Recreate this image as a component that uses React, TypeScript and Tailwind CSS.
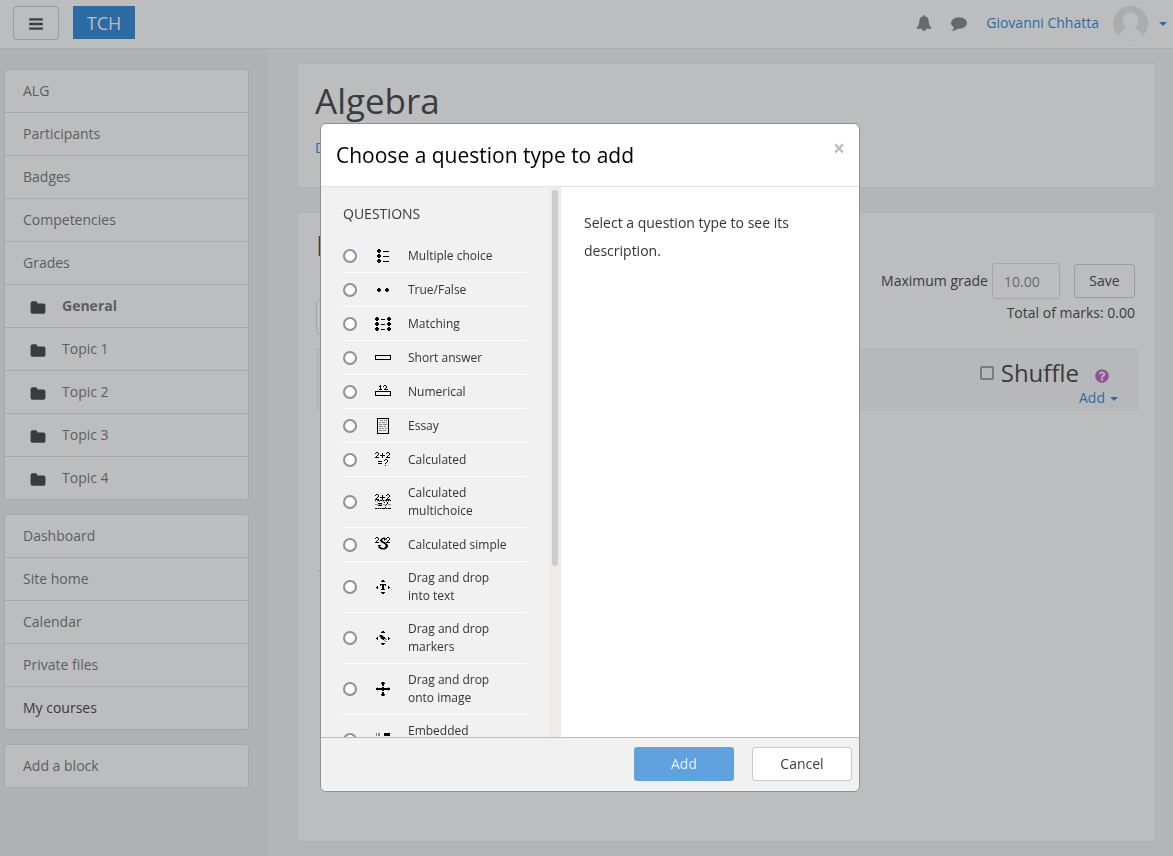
import { FaQuestionCircle } from "react-icons/fa";

/* Question type icons are 16x16 pixel drawings: "#" is black, "+" is grey. */
const PIXELS: Record<string, string[]> = {
  multichoice: [
    "................", "...##...........", "..####..........", "..####..######..", "...##...........",
    "................", "...##...........", "..####..........", "..####..######..", "...##...........",
    "................", "...##...........", "..####..........", "..####..######..", "...##...........", "................",
  ],
  truefalse: [
    "................", "................", "................", "................", "................", "................",
    "...##......##...", "..####....####..", "..####....####..", "...##......##...", "................",
    "................", "................", "................", "................", "................",
  ],
  match: [
    "................", ".##..........##.", "####........####", "####..####..####", ".##..........##.",
    "................", ".##..........##.", "####........####", "####..####..####", ".##..........##.",
    "................", ".##..........##.", "####........####", "####..####..####", ".##..........##.", "................",
  ],
  shortanswer: [
    "................", "................", "................", "................", "................",
    "################", "#..............#", "#..............#", "#..............#", "################",
    "................", "................", "................", "................", "................", "................",
  ],
  numerical: [
    "................", ".....#...##.....", "....##..#..#....", ".....#.....#....", ".....#....#.....",
    "....###..####...", "................", "################", "#..............#", "#..............#",
    "#..............#", "################", "................", "................", "................", "................",
  ],
  essay: [
    "..############..", "..#..........#..", "..#..+++.+++.#..", "..#..........#..", "..#.++.+++.+.#..", "..#..........#..",
    "..#.+++.++++.#..", "..#..........#..", "..#.++++.++..#..", "..#..........#..", "..#.++.++.++.#..", "..#..........#..",
    "..#.+++.+++..#..", "..#..........#..", "..#..........#..", "..############..",
  ],
  calculated: [
    ".##.........##..", "#..#...#...#..#.", "...#...#......#.", "..#..#####...#..", ".#.....#....#...", "####...#...####.",
    "................", "..........##....", ".........#..#...", "...####.....#...", "...........#....", "...####...#.....",
    "................", "..........#.....", "................", "................",
  ],
  calculatedmulti: [
    ".##.........##..", "#..#...#...#..#.", "...#...#......#.", "..#..#####...#..", ".#.....#....#...", "####...#...####.",
    "+.+#+##+#+##+#+#", "+.+.+...+..+.+..", ".........#..#...", "...####.....#...", "+++.+++.++.#.+++",
    "...####...#.....", "................", "..........#.....", "##+#+#+###+#+###", "................",
  ],
  calculatedsimple: [
    ".##.....++..##..", "#..#..+###+#..#.", "...#.+#+.##+..#.", "..#..##+.+...#..", ".#...+##+...#...", "####..+###+####.",
    "........+##+....", "..........##+...", "...###....+##...", "...+#.....+##...", "...+##+..+##+...",
    "....+######+....", "......++++......", "................", "................", "................",
  ],
  ddwtos: [
    "................", ".......##.......", "......####......", "................", "................", ".....######.....",
    ".....#.##.#.....", "..#....##....#..", ".##....##....##.", "..#....##....#..", "......####......",
    "................", "................", "......####......", ".......##.......", "................",
  ],
  ddmarker: [
    "................", ".......##.......", "......####......", "................", "................", "....+##+........",
    "....+###+.......", "..#..+####...#..", ".##...####+..##.", "..#....+#.++.#..", ".........+......",
    "..........++....", "................", "......####......", ".......##.......", "................",
  ],
  ddimageortext: [
    "................", "......+##+......", "......####......", ".......##.......", ".......##.......", "................",
    "..+....##....+..", ".##############.", ".##############.", "..+....##....+..", "................",
    ".......##.......", ".......##.......", "......####......", "......+##+......", "................",
  ],
  multianswer: [
    "................", ".+.++....######.", ".+.++....######.", ".+.++....######.", "................", "................",
    ".++++.++++.+++..", "................", ".++++++.++++....", "................", "................",
    "................", "................", "................", "................", "................",
  ],
};

function PixelIcon({ name }: { name: string }) {
  return (
    <svg viewBox="0 0 16 16" shapeRendering="crispEdges" aria-hidden="true" className="ml-[18px] h-4 w-4 shrink-0">
      {PIXELS[name].flatMap((row, y) =>
        row.split("").map((c, x) =>
          c === "." ? null : <rect key={`${x}-${y}`} x={x} y={y} width="1" height="1" fill={c === "#" ? "#000" : "#888"} />
        )
      )}
    </svg>
  );
}

const GLYPHS = {
  bars: "M1664 1344v128q0 26-19 45t-45 19h-1408q-26 0-45-19t-19-45v-128q0-26 19-45t45-19h1408q26 0 45 19t19 45zm0-512v128q0 26-19 45t-45 19h-1408q-26 0-45-19t-19-45v-128q0-26 19-45t45-19h1408q26 0 45 19t19 45zm0-512v128q0 26-19 45t-45 19h-1408q-26 0-45-19t-19-45v-128q0-26 19-45t45-19h1408q26 0 45 19t19 45z",
  bell: "M912 1696q0-16-16-16-59 0-101.5-42.5t-42.5-101.5q0-16-16-16t-16 16q0 73 51.5 124.5t124.5 51.5q16 0 16-16zm816-288q0 52-38 90t-90 38h-448q0 106-75 181t-181 75-181-75-75-181h-448q-52 0-90-38t-38-90q50-42 91-88t85-119.5 74.5-158.5 50-206 19.5-260q0-152 117-282.5t307-158.5q-8-19-8-39 0-40 28-68t68-28 68 28 28 68q0 20-8 39 190 28 307 158.5t117 282.5q0 139 19.5 260t50 206 74.5 158.5 85 119.5 91 88z",
  comment:
    "M1792 896q0 174-120 321.5t-326 233-450 85.5q-70 0-145-8-198 175-460 242-49 14-114 22h-5q-15 0-27-10.5t-16-27.5v-1q-3-4-.5-12t2-10 4.5-9.5l6-9 7-8.5 8-9q7-8 31-34.5t34.5-38 31-39.5 32.5-51 27-59 26-76q-157-89-247.5-220t-90.5-281q0-130 71-248.5t191-204.5 286-136.5 348-50.5q244 0 450 85.5t326 233 120 321.5z",
  folder:
    "M1728 608v704q0 92-66 158t-158 66h-1216q-92 0-158-66t-66-158v-960q0-92 66-158t158-66h320q92 0 158 66t66 158v32h672q92 0 158 66t66 158z",
};

function Glyph({ name, className }: { name: keyof typeof GLYPHS; className: string }) {
  return (
    <svg viewBox="0 0 1792 1792" aria-hidden="true" className={className}>
      <path d={GLYPHS[name]} fill="currentColor" />
    </svg>
  );
}

const QUESTIONS = [
  ["multichoice", "Multiple choice"],
  ["truefalse", "True/False"],
  ["match", "Matching"],
  ["shortanswer", "Short answer"],
  ["numerical", "Numerical"],
  ["essay", "Essay"],
  ["calculated", "Calculated"],
  ["calculatedmulti", "Calculated multichoice"],
  ["calculatedsimple", "Calculated simple"],
  ["ddwtos", "Drag and drop into text"],
  ["ddmarker", "Drag and drop markers"],
  ["ddimageortext", "Drag and drop onto image"],
  ["multianswer", "Embedded answers (Cloze)"],
];

type NavEntry = { label: string; kind?: "folder" | "current" | "dark" };

const NAV: NavEntry[][] = [
  [
    { label: "ALG" },
    { label: "Participants" },
    { label: "Badges" },
    { label: "Competencies" },
    { label: "Grades" },
    { label: "General", kind: "current" },
    { label: "Topic 1", kind: "folder" },
    { label: "Topic 2", kind: "folder" },
    { label: "Topic 3", kind: "folder" },
    { label: "Topic 4", kind: "folder" },
  ],
  [
    { label: "Dashboard" },
    { label: "Site home" },
    { label: "Calendar" },
    { label: "Private files" },
    { label: "My courses", kind: "dark" },
  ],
  [{ label: "Add a block" }],
];

function NavItem({ label, kind }: NavEntry) {
  const nested = kind === "folder" || kind === "current";
  return (
    <li className="border-b border-[#a5a8aa] last:border-b-0">
      <a
        href="#"
        className={`flex h-[42px] items-center ${nested ? "gap-4 pl-[25px]" : "pl-[18px]"} ${
          kind === "dark" ? "text-[#3a3b3d]" : "text-[#5c5d5f]"
        } ${kind === "current" ? "font-bold" : ""}`}
      >
        {nested && <Glyph name="folder" className="mt-[3px] h-4 w-4 text-[#3a3b3d]" />}
        {label}
      </a>
    </li>
  );
}

function Header() {
  return (
    <header className="flex h-[49px] items-start border-b border-[#a8abad] bg-[#bcbdbf] pt-[6px] pr-[6px] pl-[13px]">
      <button aria-label="Side panel" className="flex h-[34px] w-[46px] items-center justify-center rounded-[3px] border border-[#999b9d] pt-[2px]">
        <Glyph name="bars" className="h-4 w-4 text-[#3f4042]" />
      </button>
      <a href="#" className="ml-[14px] flex h-[33px] w-[62px] items-center justify-center bg-[#2d6ba5] text-lg text-[#bcbdbf]">
        TCH
      </a>
      <div className="ml-auto flex h-[33px] items-center">
        <button aria-label="Notifications">
          <Glyph name="bell" className="h-4 w-4 text-[#68696b]" />
        </button>
        <button aria-label="Messages" className="ml-[19px]">
          <Glyph name="comment" className="h-4 w-4 text-[#68696b]" />
        </button>
        <a href="#" className="ml-[19px] text-[#2d6ba5]">
          Giovanni Chhatta
        </a>
        <svg viewBox="0 0 35 35" aria-hidden="true" className="mt-[2px] ml-[14px] h-[35px] w-[35px] rounded-full">
          <rect width="35" height="35" fill="#abacae" />
          <ellipse cx="17.5" cy="15" rx="7.8" ry="8.5" fill="#bcbdbf" />
          <path d="M0 35v-4h5c2-5 5-7.500 8-9q4.500 2 9 0c3 1.500 6 4 8 9h5v4z" fill="#bcbdbf" />
        </svg>
        <button aria-label="User menu" className="ml-[11px]">
          <Caret />
        </button>
      </div>
    </header>
  );
}

function Caret() {
  return (
    <svg viewBox="0 0 8 4" aria-hidden="true" className="mt-[2px] h-1 w-2 text-[#2d6ba5]">
      <path d="M0 0h8L4 4z" fill="currentColor" />
    </svg>
  );
}

function Page() {
  return (
    <div className="flex min-h-screen flex-col">
      <Header />
      <div className="flex flex-1">
        <nav className="flex w-[269px] shrink-0 flex-col gap-[14px] bg-[#aeb2b3] pt-5 pr-5 pl-1">
          {NAV.map((group, i) => (
            <ul key={i} className="rounded-[3px] border border-[#a5a8aa] bg-[#bcbdbf]">
              {group.map((item) => (
                <NavItem key={item.label} {...item} />
              ))}
            </ul>
          ))}
        </nav>
        <main className="flex min-w-0 flex-1 flex-col gap-6 pt-[14px] pr-[17px] pb-[14px] pl-7">
          <section className="h-[125px] border border-[#b0b1b3] bg-[#bcbdbf] px-[17px] pt-[14px]">
            <h1 className="text-[35px] leading-[46px] text-[#3a3b3d]">Algebra</h1>
            <a href="#" className="mt-[13px] block leading-[21px] text-[#2d6ba5]">
              Dashboard
            </a>
          </section>
          <section className="flex flex-1 flex-col border border-[#b0b1b3] bg-[#bcbdbf] px-[18px] pt-[14px]">
            <h2 className="text-[28px] leading-9">Editing quiz</h2>
            <div className="flex items-end justify-between pr-[2px]">
              <button className="h-[34px] rounded-[3px] border border-[#a5a6a8] px-[14px]">Repaginate</button>
              <div className="pb-[11px]">
                <form className="flex items-center">
                  <label htmlFor="grade">Maximum grade</label>
                  <input
                    id="grade"
                    defaultValue="10.00"
                    className="ml-1 h-9 w-[68px] rounded-[3px] border border-[#a5a6a8] px-[11px] text-[#67686a]"
                  />
                  <button type="button" className="ml-[14px] h-[34px] w-[61px] rounded-[3px] border border-[#999b9d]">
                    Save
                  </button>
                </form>
                <p className="mt-[3px] text-right leading-[21px]">Total of marks: 0.00</p>
              </div>
            </div>
            <div className="mt-[14px] -mr-px flex h-[63px] flex-col items-end bg-[#b7b8ba] pr-5">
              <div className="mt-2 flex items-center pr-[9px]">
                <input id="shuffle" type="checkbox" className="h-[14px] w-[14px] appearance-none rounded-[2px] border-2 border-[#7b7a84]" />
                <label htmlFor="shuffle" className="ml-[7px] text-2xl leading-[34px]">
                  Shuffle
                </label>
                <button aria-label="Help with Shuffle" className="ml-4 pt-[5px]">
                  <FaQuestionCircle className="h-[14px] w-[14px] text-[#8f5097]" />
                </button>
              </div>
              <button className="flex items-center gap-[5px] leading-4 text-[#2d6ba5]">
                Add
                <Caret />
              </button>
            </div>
            <a href="#" className="mt-[148px] leading-[21px] text-[#2d6ba5]">
              ◄ Announcements
            </a>
          </section>
        </main>
      </div>
    </div>
  );
}

function QuestionDialog() {
  return (
    <div className="fixed inset-0 flex items-start justify-center pt-[123px] pl-[7px]">
      <div role="dialog" aria-labelledby="dialog-title" className="w-[540px] overflow-hidden rounded-[6px] border border-[#8f9092] bg-white">
        <div className="flex h-[63px] items-center justify-between border-b border-[#e3e3e3] pr-[14px] pl-[15px]">
          <h3 id="dialog-title" className="text-[21px] text-black">
            Choose a question type to add
          </h3>
          <button aria-label="Close" className="mb-[14px] text-[21px] font-bold text-[#bcbcbc]">
            ×
          </button>
        </div>
        <form>
          <div className="flex h-[550px]">
            <div className="flex w-[240px] shrink-0 bg-[#f1f1f1]">
              <fieldset className="flex-1 overflow-y-auto px-[22px] pt-[17px] [scrollbar-width:none]">
                <legend className="contents">
                  <span className="mb-[15px] block leading-5">QUESTIONS</span>
                </legend>
                {QUESTIONS.map(([id, label]) => (
                  <label key={id} className="flex items-center border-b border-white py-[7px] text-xs leading-[18px] text-[#333]">
                    <span className="flex min-h-[19px] w-full items-center">
                      <input
                        type="radio"
                        name="qtype"
                        value={id}
                        className="h-[14px] w-[14px] shrink-0 appearance-none rounded-full border-2 border-[#8f8f9d] bg-white"
                      />
                      <PixelIcon name={id} />
                      <span className="ml-[17px] w-[105px]">{label}</span>
                    </span>
                  </label>
                ))}
              </fieldset>
              <div className="w-3 bg-[#edecea] px-[3px] pt-[3px]">
                <div className="h-[376px] w-[6px] rounded-full bg-[#cdcdcd]" />
              </div>
            </div>
            <p className="flex-1 px-[23px] py-[22px] leading-7 text-[#333]">Select a question type to see its description.</p>
          </div>
          <div className="flex h-[54px] items-center justify-end gap-[18px] rounded-b-[6px] border-t border-[#bbb] bg-[#f1f1f1] pr-[7px] pb-[2px]">
            <button type="button" className="h-[34px] w-[100px] rounded-[3px] bg-[#60a2de] text-[#e6f1fb]">
              Add
            </button>
            <button type="button" className="h-[34px] w-[100px] rounded-[3px] border border-[#c8c8c8] bg-white">
              Cancel
            </button>
          </div>
        </form>
      </div>
    </div>
  );
}

export default function App() {
  return (
    <div className="bg-[#b4b5b7] font-['Open_Sans','Noto_Sans',sans-serif] text-sm text-[#3a3b3d]">
      <Page />
      <QuestionDialog />
    </div>
  );
}
